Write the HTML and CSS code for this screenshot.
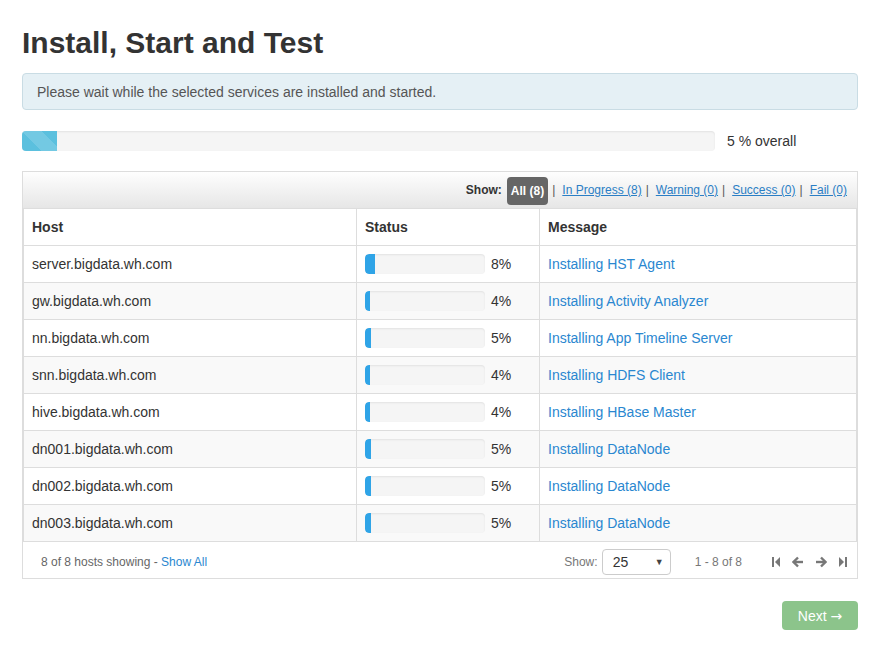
FILE: index.html
```html
<!DOCTYPE html>
<html>
<head>
<meta charset="utf-8">
<link rel="stylesheet" href="styles.css">
</head>
<body>
<div class="page">
  <h2 class="title">Install, Start and Test</h2>
  <div class="alert">Please wait while the selected services are installed and started.</div>
  <div class="overall">
    <div class="progress big"><div class="bar striped" style="width:5%"></div></div>
    <div class="overall-label">5 % overall</div>
  </div>
  <div class="box">
    <div class="toolbar">
      <span class="show-label">Show:</span>
      <span class="pill">All (8)</span>
      <span class="sep">|</span><a class="flt">In Progress (8)</a>
      <span class="sep">|</span><a class="flt">Warning (0)</a>
      <span class="sep">|</span><a class="flt">Success (0)</a>
      <span class="sep">|</span><a class="flt">Fail (0)</a>
    </div>
    <table class="hosts">
      <thead>
        <tr><th class="c-host">Host</th><th class="c-status">Status</th><th class="c-msg">Message</th></tr>
      </thead>
      <tbody>
        <tr><td>server.bigdata.wh.com</td><td><div class="st"><div class="progress small"><div class="bar" style="width:8%"></div></div><span class="pct">8%</span></div></td><td><a class="msg">Installing HST Agent</a></td></tr>
        <tr><td>gw.bigdata.wh.com</td><td><div class="st"><div class="progress small"><div class="bar" style="width:4%"></div></div><span class="pct">4%</span></div></td><td><a class="msg">Installing Activity Analyzer</a></td></tr>
        <tr><td>nn.bigdata.wh.com</td><td><div class="st"><div class="progress small"><div class="bar" style="width:5%"></div></div><span class="pct">5%</span></div></td><td><a class="msg">Installing App Timeline Server</a></td></tr>
        <tr><td>snn.bigdata.wh.com</td><td><div class="st"><div class="progress small"><div class="bar" style="width:4%"></div></div><span class="pct">4%</span></div></td><td><a class="msg">Installing HDFS Client</a></td></tr>
        <tr><td>hive.bigdata.wh.com</td><td><div class="st"><div class="progress small"><div class="bar" style="width:4%"></div></div><span class="pct">4%</span></div></td><td><a class="msg">Installing HBase Master</a></td></tr>
        <tr><td>dn001.bigdata.wh.com</td><td><div class="st"><div class="progress small"><div class="bar" style="width:5%"></div></div><span class="pct">5%</span></div></td><td><a class="msg">Installing DataNode</a></td></tr>
        <tr><td>dn002.bigdata.wh.com</td><td><div class="st"><div class="progress small"><div class="bar" style="width:5%"></div></div><span class="pct">5%</span></div></td><td><a class="msg">Installing DataNode</a></td></tr>
        <tr><td>dn003.bigdata.wh.com</td><td><div class="st"><div class="progress small"><div class="bar" style="width:5%"></div></div><span class="pct">5%</span></div></td><td><a class="msg">Installing DataNode</a></td></tr>
      </tbody>
    </table>
    <div class="footer">
      <div class="showing">8 of 8 hosts showing - <a class="link">Show All</a></div>
      <div class="pager">
        <span class="show2">Show:</span>
        <div class="select"><span>25</span><span class="caret">&#9660;</span></div>
        <span class="range">1 - 8 of 8</span>
        <span class="icons">
          <svg width="10" height="12" viewBox="0 0 10 12"><rect x="1" y="1" width="2" height="10" fill="#777"/><path d="M9 1 L4 6 L9 11 Z" fill="#777"/></svg>
          <svg width="12" height="12" viewBox="0 0 12 12"><path d="M6 1.5 L1.5 6 L6 10.5" stroke="#777" stroke-width="2.4" fill="none"/><rect x="2" y="4.8" width="9" height="2.4" fill="#777"/></svg>
          <svg width="12" height="12" viewBox="0 0 12 12"><path d="M6 1.5 L10.5 6 L6 10.5" stroke="#777" stroke-width="2.4" fill="none"/><rect x="1" y="4.8" width="9" height="2.4" fill="#777"/></svg>
          <svg width="10" height="12" viewBox="0 0 10 12"><path d="M1 1 L6 6 L1 11 Z" fill="#777"/><rect x="7" y="1" width="2" height="10" fill="#777"/></svg>
        </span>
      </div>
    </div>
  </div>
  <div class="actions"><button class="next">Next <span class="arrow">&rarr;</span></button></div>
</div>
</body>
</html>
```

FILE: styles.css
```css
html, body {
  margin: 0;
  padding: 0;
  background: #fff;
}
body {
  font-family: "Liberation Sans", Arial, sans-serif;
  font-size: 14px;
  color: #333;
}
.page {
  padding: 0 17px 0 22px;
}
.title {
  margin: 26px 0 14px;
  font-size: 30px;
  line-height: 33px;
  font-weight: bold;
  color: #333;
}
.alert {
  background: #e5f0f5;
  border: 1px solid #c9dce4;
  border-radius: 4px;
  padding: 9px 14px 8px;
  line-height: 18px;
  color: #555;
}
.overall {
  display: flex;
  align-items: center;
  margin-top: 21px;
}
.progress {
  background: #f5f5f5;
  border-radius: 4px;
  overflow: hidden;
  box-shadow: inset 0 1px 2px rgba(0,0,0,0.08);
}
.progress.big {
  flex: 1;
  height: 20px;
}
.bar {
  height: 100%;
  background: #2fa4e7;
}
.bar.striped {
  background-color: #5bc0de;
  background-image: linear-gradient(45deg, rgba(255,255,255,0.15) 25%, transparent 25%, transparent 50%, rgba(255,255,255,0.15) 50%, rgba(255,255,255,0.15) 75%, transparent 75%, transparent);
  background-size: 40px 40px;
}
.overall-label {
  width: 131px;
  margin-left: 12px;
  color: #333;
}
.box {
  margin-top: 20px;
  border: 1px solid #ddd;
}
.toolbar {
  height: 36px;
  display: flex;
  align-items: center;
  justify-content: flex-end;
  padding-right: 10px;
  background: linear-gradient(#fefefe, #e6e6e6);
  font-size: 12px;
}
.show-label {
  font-weight: bold;
  color: #333;
  margin-right: 5px;
}
.pill {
  background: #666;
  color: #fff;
  font-weight: bold;
  border-radius: 4px;
  padding: 0 4px;
  height: 28px;
  line-height: 28px;
  margin-top: 1px;
}
.sep {
  color: #555;
  margin: 0 7px 0 4px;
}
.flt {
  color: #2a7ec5;
  text-decoration: underline;
}
.hosts {
  width: 100%;
  border-collapse: collapse;
  border: 1px solid #ddd;
  table-layout: fixed;
}
.hosts th, .hosts td {
  border: 1px solid #ddd;
  padding: 8px;
  line-height: 20px;
  text-align: left;
  vertical-align: middle;
  white-space: nowrap;
}
.hosts th {
  font-weight: bold;
  color: #333;
}
.c-host { width: 316px; }
.c-status { width: 166px; }
.hosts tbody tr:nth-child(even) td {
  background: #f9f9f9;
}
.st {
  display: flex;
  align-items: center;
}
.progress.small {
  width: 120px;
  height: 20px;
  border-radius: 4px;
}
.progress.small .bar {
  border-radius: 4px 0 0 4px;
}
.pct {
  margin-left: 6px;
}
.msg {
  color: #2a87d0;
}
.footer {
  height: 36px;
  box-sizing: border-box;
  display: flex;
  align-items: center;
  justify-content: space-between;
  font-size: 12px;
  color: #666;
  padding: 3px 9px 0 18px;
}
.link {
  color: #2a87d0;
}
.pager {
  display: flex;
  align-items: center;
}
.show2 {
  color: #777;
  margin-right: 4px;
}
.select {
  width: 69px;
  height: 26px;
  box-sizing: border-box;
  border: 1px solid #ccc;
  border-radius: 4px;
  display: flex;
  align-items: center;
  justify-content: space-between;
  padding: 0 6px 0 10px;
  font-size: 14px;
  color: #333;
  background: #fff;
}
.caret {
  font-size: 9px;
  color: #444;
}
.range {
  margin-left: 24px;
  color: #777;
}
.icons {
  display: flex;
  align-items: center;
  gap: 11px;
  margin-left: 29px;
}
.icons svg {
  display: block;
}
.actions {
  display: flex;
  justify-content: flex-end;
  margin-top: 22px;
}
.next {
  width: 76px;
  height: 29px;
  border: 0;
  border-radius: 4px;
  background: #8cc48b;
  color: #fff;
  font-family: "Liberation Sans", Arial, sans-serif;
  font-size: 14px;
  padding: 0;
}
.arrow {
  font-family: "DejaVu Sans", sans-serif;
  font-size: 14px;
}
```
